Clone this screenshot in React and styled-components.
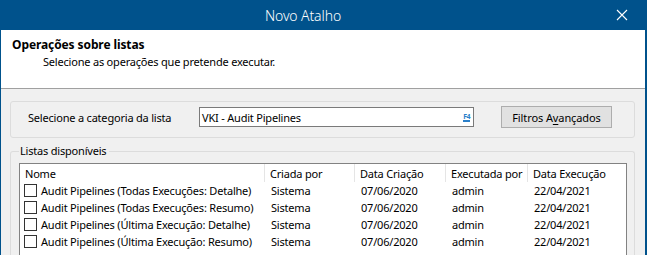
import React from 'react';
import styled, { createGlobalStyle } from 'styled-components';

const GlobalStyle = createGlobalStyle`
  html, body {
    margin: 0;
    padding: 0;
    background: #ffffff;
  }
  body {
    font-family: "Noto Sans", "Open Sans", "Liberation Sans", sans-serif;
    font-size: 11px;
    letter-spacing: -0.2px;
    color: #000;
  }
`

// styles
const Window = styled.div`
  width: 644px;
  height: 255px;
  overflow: hidden;
  border-left: 1px solid #00528c;
  border-right: 2px solid #00528c;
  background: #f0f0f0;
  display: flex;
  flex-direction: column;
`
const TitleBar = styled.div`
  height: 30px;
  flex: none;
  background: #00528c;
  color: #fff;
  display: flex;
  align-items: center;
  position: relative;
  margin-left: -1px;
`
const Title = styled.div`
  width: 606px;
  text-align: center;
  font-size: 14px;
  font-weight: 300;
  letter-spacing: -0.1px;
`
const CloseButton = styled.button`
  position: absolute;
  right: 17px;
  top: 9px;
  width: 12px;
  height: 12px;
  padding: 0;
  border: 0;
  background: transparent;
  display: flex;
`
const Header = styled.div`
  height: 59px;
  flex: none;
  background: #fff;
  border-bottom: 1px solid #a0a0a0;
  padding: 7px 0 0 11px;
  box-sizing: border-box;
`
const HeaderTitle = styled.div`
  font-weight: bold;
  font-size: 12px;
  letter-spacing: -0.1px;
  line-height: 16px;
`
const HeaderSub = styled.div`
  padding-left: 31px;
  line-height: 18px;
`
const Body = styled.div`
  flex: 1;
  padding: 12px 10px 0 9px;
  display: flex;
  flex-direction: column;
  gap: 6px;
`
const CategoryBox = styled.div`
  flex: none;
  border: 1px solid #dcdcdc;
  border-radius: 3px;
  display: flex;
  align-items: flex-start;
  padding: 4px 0 0 17px;
  box-sizing: content-box;
  height: 31px;
`
const CategoryLabel = styled.span`
  width: 171px;
  margin-top: 3px;
  line-height: 18px;
`
const InputBox = styled.div`
  width: 271px;
  height: 18px;
  margin-top: 1px;
  border: 1px solid #7a7a7a;
  background: #fff;
  display: flex;
  align-items: center;
  justify-content: space-between;
  padding-left: 2px;
  box-sizing: content-box;
`
const F4 = styled.span`
  font-size: 7px;
  font-weight: bold;
  color: #2a7fc9;
  margin-right: 3px;
  line-height: 7px;
  border-bottom: 2px solid #2a7fc9;
  letter-spacing: -0.5px;
`
const Button = styled.button`
  margin-left: 27px;
  width: 111px;
  height: 22px;
  border: 1px solid #adadad;
  background: #e1e1e1;
  font-family: inherit;
  font-size: 11px;
  letter-spacing: -0.1px;
  color: #000;
  padding: 0;
  u { text-decoration: underline; text-underline-offset: 2px; }
`
const Fieldset = styled.fieldset`
  margin: 0;
  padding: 5px 7px 0 8px;
  border: 1px solid #dcdcdc;
  border-bottom: 0;
  border-radius: 3px 3px 0 0;
  flex: 1;
  min-width: 0;
`
const Legend = styled.legend`
  padding: 0 3px 0 1px;
  margin-left: 0;
  line-height: 14px;
`
const Table = styled.div`
  border: 1px solid #828282;
  border-bottom: 0;
  background: #fff;
  height: 100px;
`
const Row = styled.div`
  display: grid;
  grid-template-columns: 245px 90px 91px 82px 1fr;
  height: ${p => (p.$head ? '18px' : '17px')};
  align-items: center;
`
const HeadCell = styled.div`
  height: 100%;
  display: flex;
  align-items: center;
  padding-left: 5px;
  border-right: 1px solid #e5e5e5;
  &:last-child { border-right: 0; }
  white-space: nowrap;
`
const Cell = styled.div`
  padding-left: ${p => (p.$first ? '4px' : '6px')};
  display: flex;
  align-items: center;
  gap: 4px;
  white-space: nowrap;
`
const Check = styled.span`
  width: 11px;
  height: 11px;
  border: 1px solid #333;
  background: #fff;
  flex: none;
`

const rows = [
  'Audit Pipelines (Todas Execuções: Detalhe)',
  'Audit Pipelines (Todas Execuções: Resumo)',
  'Audit Pipelines (Última Execução: Detalhe)',
  'Audit Pipelines (Última Execução: Resumo)',
];

function App() {
  return (
    <Window>
      <GlobalStyle />
      <TitleBar>
        <Title>Novo Atalho</Title>
        <CloseButton aria-label="Fechar">
          <svg width="12" height="12" viewBox="0 0 12 12">
            <path d="M1 1L11 11M11 1L1 11" stroke="#fff" strokeWidth="1.1" />
          </svg>
        </CloseButton>
      </TitleBar>

      <Header>
        <HeaderTitle>Operações sobre listas</HeaderTitle>
        <HeaderSub>Selecione as operações que pretende executar.</HeaderSub>
      </Header>

      <Body>
        <CategoryBox>
          <CategoryLabel>Selecione a categoria da lista</CategoryLabel>
          <InputBox>
            <span>VKI - Audit Pipelines</span>
            <F4>F4</F4>
          </InputBox>
          <Button>Filtros A<u>v</u>ançados</Button>
        </CategoryBox>

        <Fieldset>
          <Legend>Listas disponíveis</Legend>
          <Table>
            <Row $head>
              <HeadCell>Nome</HeadCell>
              <HeadCell>Criada por</HeadCell>
              <HeadCell>Data Criação</HeadCell>
              <HeadCell>Executada por</HeadCell>
              <HeadCell>Data Execução</HeadCell>
            </Row>
            {rows.map(name => (
              <Row key={name}>
                <Cell $first><Check />{name}</Cell>
                <Cell>Sistema</Cell>
                <Cell>07/06/2020</Cell>
                <Cell>admin</Cell>
                <Cell>22/04/2021</Cell>
              </Row>
            ))}
          </Table>
        </Fieldset>
      </Body>
    </Window>
  );
}

export default App;
